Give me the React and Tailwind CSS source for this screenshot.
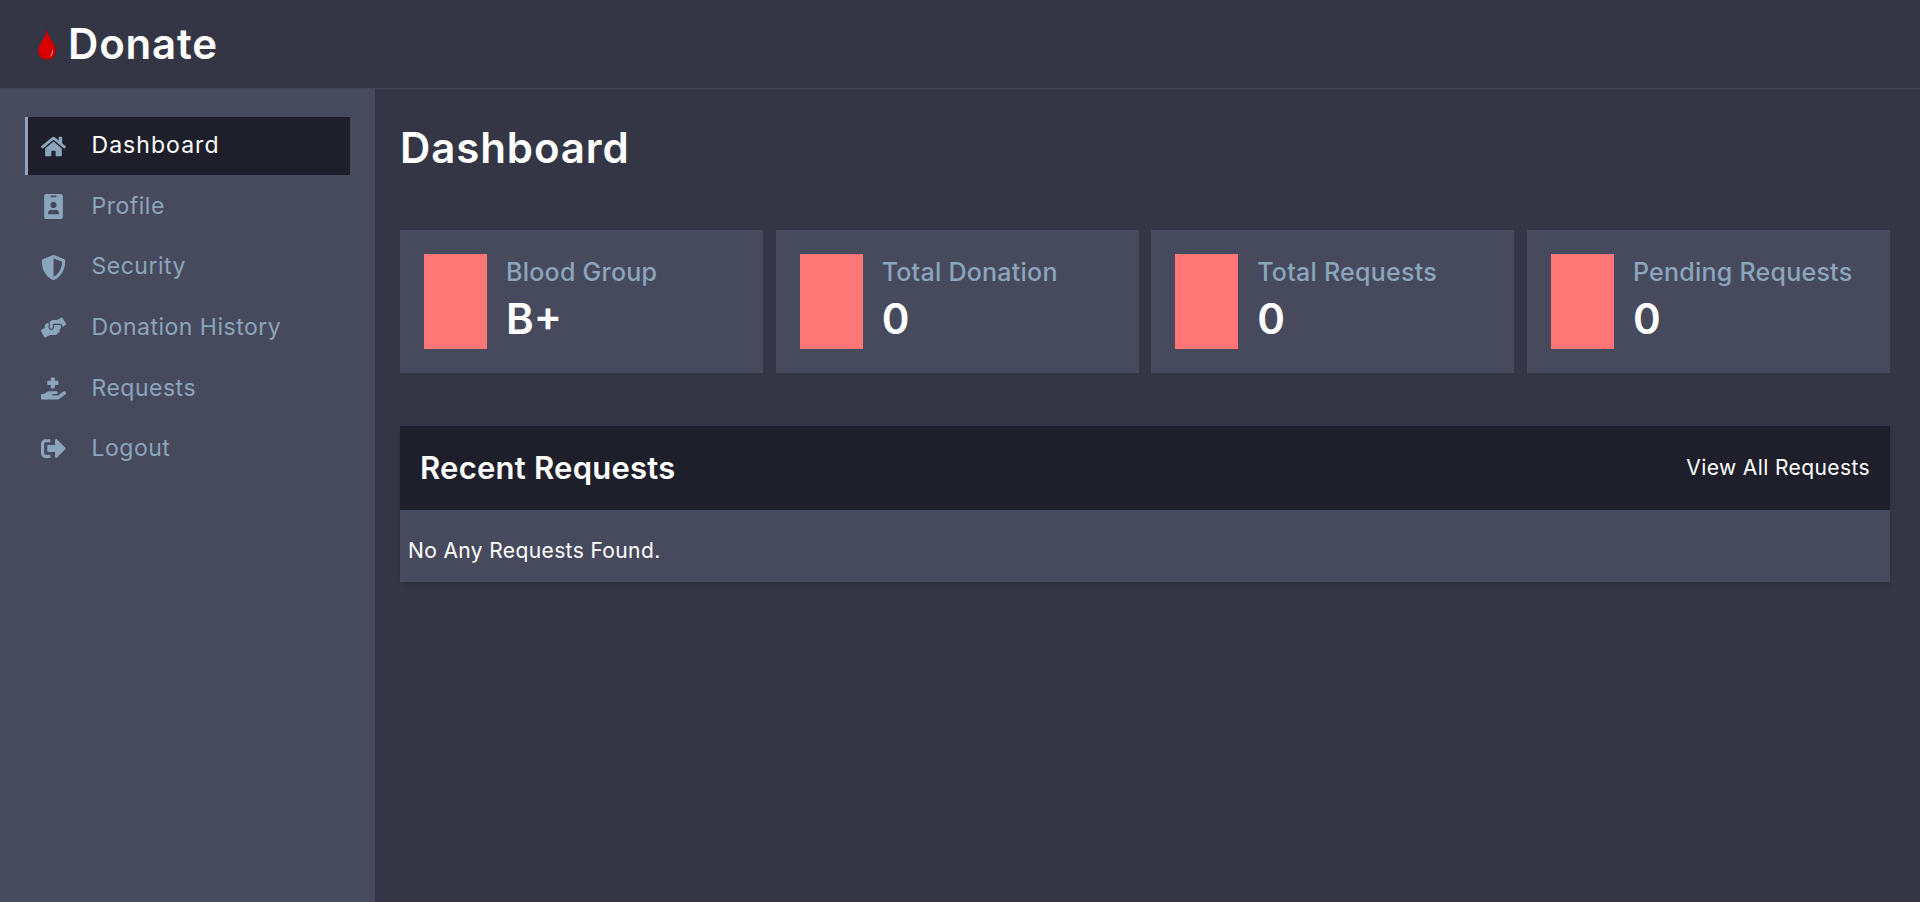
import React from "react";
import { FaHome, FaIdBadge, FaShieldAlt, FaHandsHelping, FaHandHoldingMedical, FaSignOutAlt } from "react-icons/fa";

const nav = [
  { label: "Dashboard", Icon: FaHome, active: true },
  { label: "Profile", Icon: FaIdBadge },
  { label: "Security", Icon: FaShieldAlt },
  { label: "Donation History", Icon: FaHandsHelping },
  { label: "Requests", Icon: FaHandHoldingMedical },
  { label: "Logout", Icon: FaSignOutAlt },
];

const stats = [
  { label: "Blood Group", value: "B+" },
  { label: "Total Donation", value: "0" },
  { label: "Total Requests", value: "0" },
  { label: "Pending Requests", value: "0" },
];

function Drop() {
  return (
    <svg width="20" height="32" viewBox="0 0 20 32" className="shrink-0">
      <defs>
        <radialGradient id="dropFill" cx="45%" cy="62%" r="60%">
          <stop offset="0%" stopColor="#e40000" />
          <stop offset="70%" stopColor="#cc0000" />
          <stop offset="100%" stopColor="#900000" />
        </radialGradient>
      </defs>
      <path d="M10 0.5 C10.4 5 12.8 9 15 13 C17 16.5 19 19.5 19 23 C19 28 15 31.5 10 31.5 C5 31.5 1 28 1 23 C1 19.5 3 16.5 5 13 C7.2 9 9.6 5 10 0.5 Z" fill="url(#dropFill)" />
      <path d="M15.2 20.5 C16.8 24 15.6 27.5 12.6 29 C14.6 26.6 15.4 23.8 15.2 20.5 Z" fill="#ff9c9c" />
    </svg>
  );
}

export default function App() {
  return (
    <div className="h-[902px] flex flex-col overflow-hidden bg-[#343645] text-white font-['Inter','Liberation_Sans',sans-serif]">
      <header className="h-[89px] shrink-0 flex items-center pl-[37px] gap-[11px] bg-[#343645] border-b border-[#44465a]">
        <Drop />
        <span className="text-[42px] font-semibold tracking-[0.8px] leading-none">Donate</span>
      </header>
      <div className="flex flex-1 min-h-0">
        <aside className="w-[375px] shrink-0 bg-[#474a5c] pt-[28px] px-[25px] flex flex-col gap-[2.6px]">
          {nav.map(({ label, Icon, active }) => (
            <div
              key={label}
              className={
                active
                  ? "h-[58px] flex items-center bg-[#1f1f2b] border-l-[3px] border-[#8ba5bc] pl-[13px] text-white text-[23px] tracking-[1.05px]"
                  : "h-[58px] flex items-center border-l-[3px] border-transparent pl-[13px] text-[#8ba5bc] text-[23px] tracking-[0.5px]"
              }
            >
              <span className="w-[25px] flex justify-center text-[#8ba5bc] text-[25px] shrink-0">
                <Icon />
              </span>
              <span className="ml-[25.5px] pb-[1px]">{label}</span>
            </div>
          ))}
        </aside>
        <main className="flex-1 min-w-0 pl-[25px] pr-[30px] pt-[35px]">
          <h1 className="text-[42px] font-semibold leading-[48px] tracking-[0.9px]">Dashboard</h1>
          <div className="grid grid-cols-4 gap-[12.5px] mt-[58px]">
            {stats.map(({ label, value }) => (
              <div key={label} className="h-[143px] bg-[#474a5c] flex items-center pl-[24px]">
                <div className="w-[63px] h-[95px] bg-[#ff7676] shrink-0" />
                <div className="ml-[19px] pb-[1px]">
                  <div className="text-[25px] font-medium text-[#8ba5bc] leading-[36px] tracking-[0.25px]">{label}</div>
                  <div className="text-[42px] font-semibold leading-[58px]">{value}</div>
                </div>
              </div>
            ))}
          </div>
          <section className="mt-[53px] shadow-md">
            <div className="h-[84px] bg-[#1f1f2b] flex items-center justify-between px-[20px]">
              <span className="text-[31px] font-semibold tracking-[0.25px]">Recent Requests</span>
              <span className="text-[21px] tracking-[0.4px]">View All Requests</span>
            </div>
            <div className="h-[72px] bg-[#474a5c] flex items-center pl-[8px] pt-[9px] text-[21px] tracking-[0.38px]">
              No Any Requests Found.
            </div>
          </section>
        </main>
      </div>
    </div>
  );
}
